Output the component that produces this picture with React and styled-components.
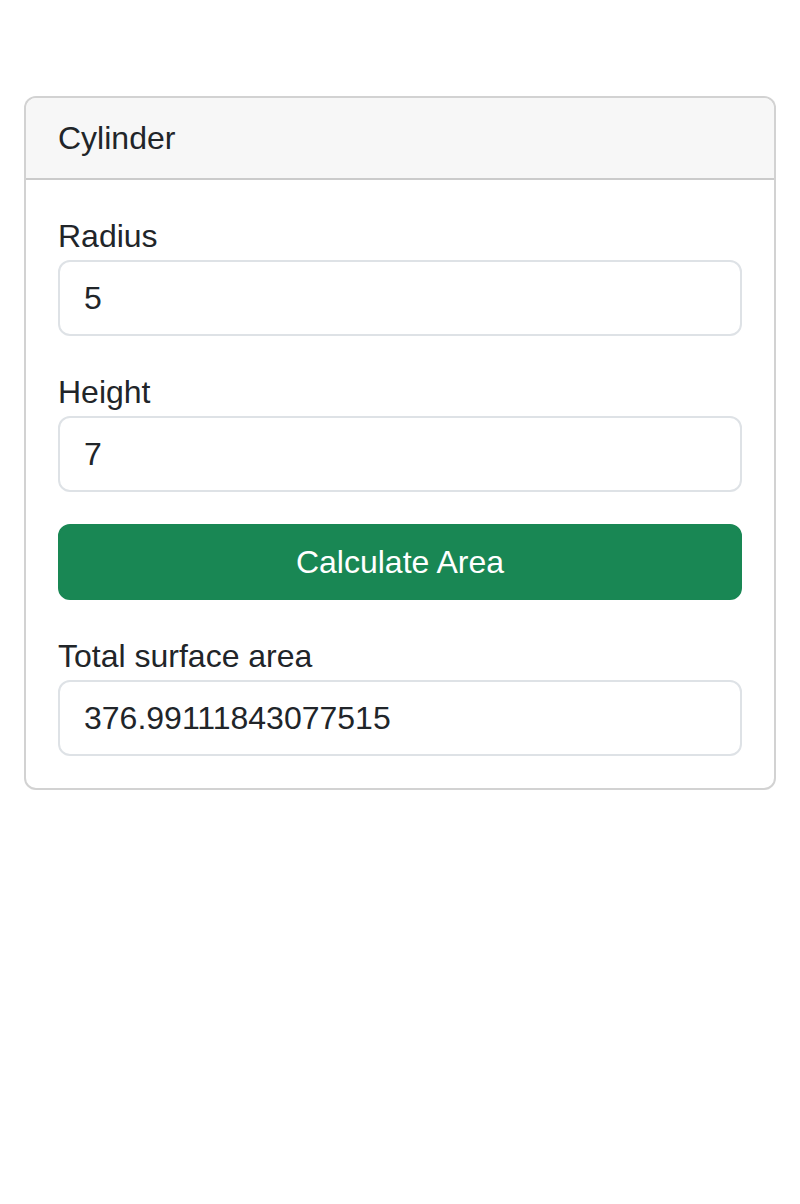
import React, { useState } from 'react';
import styled, { createGlobalStyle } from 'styled-components';

const GlobalStyle = createGlobalStyle`
  html, body {
    margin: 0;
    padding: 0;
    background: #fff;
  }

  body {
    font-family: "Liberation Sans", Arial, sans-serif;
    font-size: 32px;
    line-height: 1.5;
    color: #212529;
  }

  *, *::before, *::after {
    box-sizing: border-box;
  }
`;

const Container = styled.div`
  padding: 96px 24px 0;
`;

const Card = styled.div`
  border: 2px solid rgba(0, 0, 0, 0.175);
  border-radius: 12px;
  overflow: hidden;
  background: #fff;
`;

const CardHeader = styled.div`
  padding: 16px 32px;
  background: #f7f7f7;
  border-bottom: 2px solid rgba(0, 0, 0, 0.175);
`;

const CardBody = styled.div`
  padding: 32px;
  display: flex;
  flex-direction: column;
`;

const Group = styled.div`
  margin-bottom: ${(props) => (props.last ? '0' : '32px')};
`;

const Label = styled.label`
  display: block;
  margin-bottom: 0;
`;

const Input = styled.input`
  display: block;
  width: 100%;
  padding: 12px 24px;
  font-family: inherit;
  font-size: 32px;
  line-height: 1.5;
  color: #212529;
  background: #fff;
  border: 2px solid #dee2e6;
  border-radius: 12px;
  outline: none;
`;

const Button = styled.button`
  display: block;
  width: 100%;
  padding: 12px 24px;
  margin-bottom: 32px;
  font-family: inherit;
  font-size: 32px;
  line-height: 1.5;
  color: #fff;
  background: #198754;
  border: 2px solid #198754;
  border-radius: 12px;
  cursor: pointer;
`;

export default function App() {
  const [radius, setRadius] = useState('5');
  const [height, setHeight] = useState('7');
  const [area, setArea] = useState('376.99111843077515');

  const calculate = () => {
    const r = parseFloat(radius);
    const h = parseFloat(height);
    setArea(String(2 * Math.PI * r * (r + h)));
  };

  return (
    <>
      <GlobalStyle />
      <Container>
        <Card>
          <CardHeader>Cylinder</CardHeader>
          <CardBody>
            <Group>
              <Label htmlFor="radius">Radius</Label>
              <Input id="radius" value={radius} onChange={(e) => setRadius(e.target.value)} />
            </Group>
            <Group>
              <Label htmlFor="height">Height</Label>
              <Input id="height" value={height} onChange={(e) => setHeight(e.target.value)} />
            </Group>
            <Button onClick={calculate}>Calculate Area</Button>
            <Group last>
              <Label htmlFor="area">Total surface area</Label>
              <Input id="area" value={area} readOnly />
            </Group>
          </CardBody>
        </Card>
      </Container>
    </>
  );
}
